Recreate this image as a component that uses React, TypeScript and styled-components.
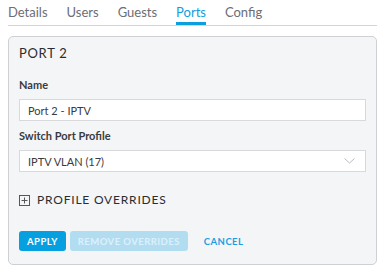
import React, { useState } from 'react';
import styled, { createGlobalStyle } from 'styled-components';

const GlobalStyle = createGlobalStyle`
  body {
    margin: 0;
    background: #ffffff;
    font-family: Lato, 'Open Sans', sans-serif;
  }
`;

const Page = styled.div`
  padding: 0 10px 0 8px;
  width: 369px;
`;

const Tabs = styled.nav`
  display: flex;
  gap: 19px;
  border-bottom: 1px solid #d4d5d8;
  height: 25px;
`;

const Tab = styled.button<{ active?: boolean }>`
  border: none;
  background: none;
  padding: 2px 0 0;
  margin: 0;
  font-family: inherit;
  font-size: 13px;
  line-height: 16px;
  height: 25px;
  align-self: flex-start;
  box-sizing: border-box;
  color: ${(p) => (p.active ? '#0d9ee0' : '#6b6e74')};
  border-bottom: 3px solid ${(p) => (p.active ? '#0d9ee0' : 'transparent')};
  cursor: pointer;
`;

const Card = styled.section`
  margin-top: 10px;
  border: 1px solid #cfd0d3;
  border-radius: 5px;
  background: #f4f5f7;
  padding: 8px 10px 13px 10px;
`;

const Heading = styled.h2`
  margin: 0;
  font-size: 13px;
  line-height: 16px;
  font-weight: 400;
  letter-spacing: 0.7px;
  color: #2b2c30;
`;

const Field = styled.div<{ top: number }>`
  margin-top: ${(p) => p.top}px;
  display: flex;
  flex-direction: column;
  gap: 7px;
`;

const Label = styled.label`
  font-size: 11px;
  line-height: 14px;
  font-weight: 700;
  color: #3a3b3f;
`;

const Input = styled.input`
  box-sizing: border-box;
  height: 22px;
  border: 1px solid #d8d9dc;
  background: #ffffff;
  padding: 0 8px;
  font-family: inherit;
  font-size: 11px;
  color: #3a3b3f;
  outline: none;
`;

const Select = styled.div`
  box-sizing: border-box;
  height: 22px;
  border: 1px solid #d8d9dc;
  background: #ffffff;
  padding: 0 10px 0 8px;
  display: flex;
  align-items: center;
  justify-content: space-between;
  font-size: 11px;
  color: #3a3b3f;
`;

const Overrides = styled.button`
  margin-top: 20px;
  display: flex;
  align-items: center;
  gap: 7px;
  border: none;
  background: none;
  padding: 0;
  font-family: inherit;
  font-size: 12px;
  line-height: 16px;
  letter-spacing: 0.8px;
  color: #2b2c30;
  cursor: pointer;
`;

const Actions = styled.div`
  margin-top: 23px;
  display: flex;
  align-items: center;
  gap: 4px;
`;

const Button = styled.button<{ kind: 'primary' | 'disabled' | 'link' }>`
  height: 20px;
  border: none;
  border-radius: 3px;
  padding: 0 ${(p) => (p.kind === 'link' ? '12px' : '8px')};
  font-family: inherit;
  font-size: 9.5px;
  font-weight: 700;
  letter-spacing: 0.45px;
  background: ${(p) =>
    p.kind === 'primary' ? '#069fe0' : p.kind === 'disabled' ? '#b2ddf1' : 'transparent'};
  color: ${(p) =>
    p.kind === 'primary' ? '#ffffff' : p.kind === 'disabled' ? '#dcf0fa' : '#1c9fe0'};
  cursor: ${(p) => (p.kind === 'disabled' ? 'default' : 'pointer')};
`;

const tabs = ['Details', 'Users', 'Guests', 'Ports', 'Config'];

export default function App() {
  const [active, setActive] = useState('Ports');
  const [name, setName] = useState('Port 2 - IPTV');

  return (
    <Page>
      <GlobalStyle />
      <Tabs>
        {tabs.map((t) => (
          <Tab key={t} active={t === active} onClick={() => setActive(t)}>
            {t}
          </Tab>
        ))}
      </Tabs>
      <Card>
        <Heading>PORT 2</Heading>
        <Field top={17}>
          <Label>Name</Label>
          <Input value={name} onChange={(e) => setName(e.target.value)} />
        </Field>
        <Field top={8}>
          <Label>Switch Port Profile</Label>
          <Select>
            <span>IPTV VLAN (17)</span>
            <svg width="11" height="6" viewBox="0 0 11 6">
              <path d="M0.5 0.5 L5.5 5 L10.5 0.5" fill="none" stroke="#b9bbbf" strokeWidth="1" />
            </svg>
          </Select>
        </Field>
        <Overrides>
          <svg width="11" height="11" viewBox="0 0 11 11">
            <rect x="0.5" y="0.5" width="10" height="10" fill="none" stroke="#55575c" />
            <path d="M5.5 2.5 V8.5 M2.5 5.5 H8.5" stroke="#55575c" />
          </svg>
          PROFILE OVERRIDES
        </Overrides>
        <Actions>
          <Button kind="primary">APPLY</Button>
          <Button kind="disabled" disabled>
            REMOVE OVERRIDES
          </Button>
          <Button kind="link">CANCEL</Button>
        </Actions>
      </Card>
    </Page>
  );
}
